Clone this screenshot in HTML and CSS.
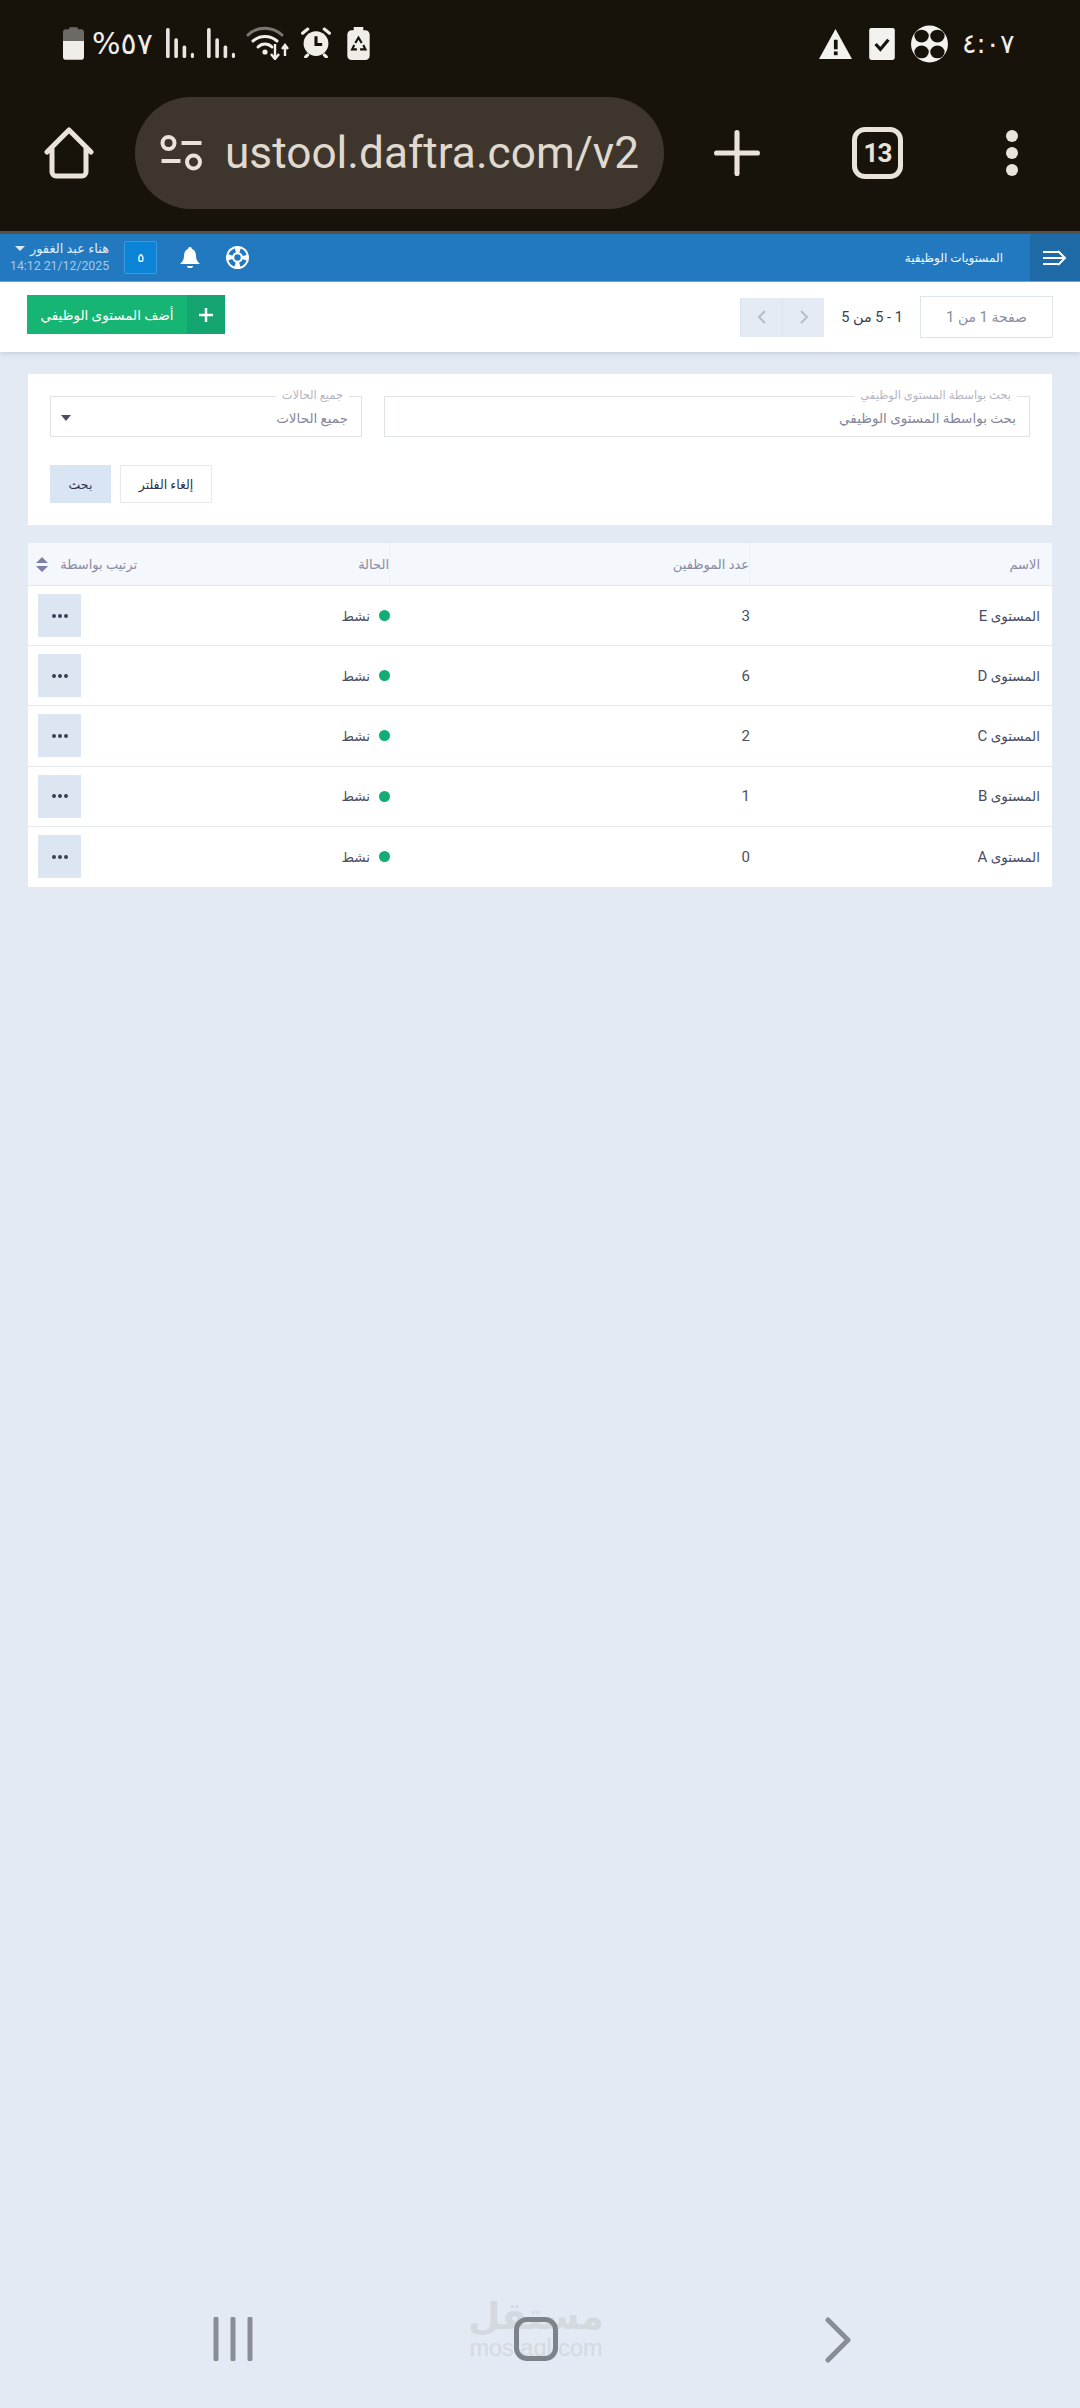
FILE: index.html
```html
<!doctype html>
<html lang="ar">
  <head>
    <meta charset="UTF-8" />
    <meta name="viewport" content="width=device-width, initial-scale=1.0" />
    <title>المستويات الوظيفية</title>
    <link rel="stylesheet" href="styles.css">
  </head>
  <body>
    <div class="chrome">
      <div class="status-bar">
        <div class="status-group">
          <svg class="ic-battery" width="21" height="33" viewBox="0 0 20 31"><path d="M6 0h8v2h3a3 3 0 0 1 3 3v8H0V5a3 3 0 0 1 3-3h3z" fill="#6d6966"/><path d="M0 13h20v15a3 3 0 0 1-3 3H3a3 3 0 0 1-3-3z" fill="#f1eeea"/></svg>
          <span class="status-pct">%٥٧</span>
          <svg class="ic-signal" width="28" height="30" viewBox="0 0 27 29"><g fill="#e9e6e1"><rect x="0" y="0" width="3.5" height="29" rx="1.5"/><rect x="8" y="10" width="3.5" height="19" rx="1.5"/><rect x="16" y="17" width="3.5" height="12" rx="1.5"/><rect x="24" y="24" width="3" height="5" rx="1.5"/></g></svg>
          <svg class="ic-signal" width="28" height="30" viewBox="0 0 27 29"><g fill="#e9e6e1"><rect x="0" y="0" width="3.5" height="29" rx="1.5"/><rect x="8" y="10" width="3.5" height="19" rx="1.5"/><rect x="16" y="17" width="3.5" height="12" rx="1.5"/><rect x="24" y="24" width="3" height="5" rx="1.5"/></g></svg>
          <svg class="ic-wifi" width="44" height="34" viewBox="0 0 44 34"><g fill="none" stroke-linecap="round" stroke-width="3"><path d="M2 9C11 0 26 0 36 9" stroke="#7a7673"/><path d="M7 15c7-6 17-6 24 0" stroke="#f1eeea"/><path d="M12 21c4-4 10-4 14 0" stroke="#f1eeea"/></g><circle cx="19" cy="26" r="2.6" fill="#f1eeea"/><g fill="none" stroke="#f1eeea" stroke-width="2.4"><path d="M29 18v14M25 28l4 5 4-5"/><path d="M39 30V19M36 23l3-4 3 4"/></g></svg>
          <svg class="ic-alarm" width="30" height="31" viewBox="0 0 28 30"><circle cx="14" cy="16" r="12" fill="#f1eeea"/><g stroke="#f1eeea" stroke-width="3" stroke-linecap="round"><path d="M1 6l5-4M27 6l-5-4M6 27l-2 2M22 27l2 2"/></g><path d="M14 9v8h6" fill="none" stroke="#18130a" stroke-width="3"/></svg>
          <svg class="ic-saver" width="23" height="33" viewBox="0 0 21 31"><path d="M6 0h9v3h2a4 4 0 0 1 4 4v20a4 4 0 0 1-4 4H4a4 4 0 0 1-4-4V7a4 4 0 0 1 4-4h2z" fill="#f1eeea"/><g fill="none" stroke="#18130a" stroke-width="2"><path d="M7.5 15l3-5 3 5"/><path d="M15 17l2 4h-5"/><path d="M9 21H4.500l2-4"/></g></svg>
        </div>
        <div class="status-group status-right">
          <svg class="ic-warn" width="33" height="30" viewBox="0 0 31 28"><path d="M15.500 0L31 28H0z" fill="#f4f2ef"/><rect x="14" y="10" width="3.500" height="9" fill="#18130a"/><rect x="14" y="21" width="3.500" height="3.500" fill="#18130a"/></svg>
          <svg class="ic-check" width="26" height="32" viewBox="0 0 24 30"><rect width="24" height="30" rx="2" fill="#f4f2ef"/><path d="M6 15l4.500 5L18 11" fill="none" stroke="#18130a" stroke-width="3"/></svg>
          <svg class="ic-fan" width="37" height="38" viewBox="0 0 35 36"><circle cx="17.500" cy="18" r="17.500" fill="#f4f2ef"/><g fill="#18130a"><ellipse cx="10" cy="10.500" rx="6.800" ry="6"/><ellipse cx="25" cy="10.500" rx="6.800" ry="6"/><ellipse cx="10" cy="25.500" rx="6.800" ry="6"/><ellipse cx="25" cy="25.500" rx="6.800" ry="6"/></g></svg>
          <span class="status-time">٤:٠٧</span>
        </div>
      </div>
      <div class="toolbar">
        <svg class="ic-home" width="52" height="52" viewBox="0 0 50 52"><path d="M3 25L25 3l22 22M8 21v24a4 4 0 0 0 4 4h26a4 4 0 0 0 4-4V21" fill="none" stroke="#eae3da" stroke-width="5" stroke-linecap="round" stroke-linejoin="round"/></svg>
        <div class="url-pill">
          <svg width="43" height="36" viewBox="0 0 42 36"><g fill="none" stroke="#eae3da" stroke-width="4"><circle cx="8" cy="8" r="6"/><circle cx="33" cy="27" r="6.500"/></g><g stroke="#eae3da" stroke-width="4"><path d="M21 8h20M1 26h19"/></g></svg>
          <span class="url-text">ustool.daftra.com/v2</span>
        </div>
        <svg class="ic-plus" width="46" height="46" viewBox="0 0 45 45"><path d="M2.500 22.500h40M22.500 2.500v40" stroke="#eae3da" stroke-width="5" stroke-linecap="round"/></svg>
        <div class="tab-count">13</div>
        <svg class="ic-dots" width="14" height="46" viewBox="0 0 14 46"><g fill="#eae3da"><circle cx="7" cy="6" r="6"/><circle cx="7" cy="23" r="6"/><circle cx="7" cy="40" r="6"/></g></svg>
      </div>
    </div>

    <div class="page" dir="rtl">
      <header class="topbar">
        <div class="topbar-toggle">
          <svg width="24" height="16" viewBox="0 0 24 16"><g fill="none" stroke="#fff" stroke-width="2"><path d="M0 2h15M0 8h22M0 14h15M15 1l7 7-7 7"/></g></svg>
        </div>
        <div class="topbar-title">المستويات الوظيفية</div>
        <div class="topbar-actions">
          <svg class="ic-help" width="23" height="23" viewBox="0 0 23 23"><circle cx="11.500" cy="11.500" r="11.500" fill="#fff"/><circle cx="11.500" cy="11.500" r="7.500" fill="none" stroke="#2279bf" stroke-width="4" stroke-dasharray="7 4.780" stroke-dashoffset="-2.390"/><circle cx="11.500" cy="11.500" r="3.200" fill="#2279bf"/></svg>
          <svg class="ic-bell" width="20" height="22" viewBox="0 0 20 22"><path d="M10 0a2 2 0 0 1 2 2c3 1 4 4 4 7 0 4 2 6 4 8H0c2-2 4-4 4-8 0-3 1-6 4-7a2 2 0 0 1 2-2z" fill="#fff"/><path d="M7 19h6a3 2 0 0 1-6 0z" fill="#fff"/></svg>
          <div class="branch-btn">٥</div>
          <div class="user-box">
            <div class="user-name">هناء عبد الغفور <span class="caret"></span></div>
            <div class="user-date">14:12 21/12/2025</div>
          </div>
        </div>
      </header>

      <div class="subbar">
        <div class="pager">
          <div class="page-box"><span>صفحة <span class="lat">1</span> من <span class="lat">1</span></span></div>
          <div class="page-range">1 - 5 من 5</div>
          <div class="page-nav">
            <span><svg width="10" height="16" viewBox="0 0 10 16"><path d="M2 2l6 6-6 6" fill="none" stroke="#b9bcc6" stroke-width="2"/></svg></span>
            <span><svg width="10" height="16" viewBox="0 0 10 16"><path d="M8 2L2 8l6 6" fill="none" stroke="#b9bcc6" stroke-width="2"/></svg></span>
          </div>
        </div>
        <div class="add-btn">
          <span class="add-icon"><svg width="14" height="14" viewBox="0 0 14 14"><path d="M0 7h14M7 0v14" stroke="#fff" stroke-width="2.500"/></svg></span>
          <span class="add-label">أضف المستوى الوظيفي</span>
        </div>
      </div>

      <main class="content">
        <section class="filter-card">
          <div class="filter-fields">
            <div class="field field-wide">
              <span class="field-legend">بحث بواسطة المستوى الوظيفي</span>
              <span class="field-value">بحث بواسطة المستوى الوظيفي</span>
            </div>
            <div class="field field-select">
              <span class="field-legend">جميع الحالات</span>
              <span class="field-value">جميع الحالات</span>
              <span class="select-caret"></span>
            </div>
          </div>
          <div class="filter-actions">
            <div class="btn-clear">إلغاء الفلتر</div>
            <div class="btn-search">بحث</div>
          </div>
        </section>

        <section class="table-card">
          <div class="row head">
            <div class="cell c-name">الاسم</div>
            <div class="cell c-count">عدد الموظفين</div>
            <div class="cell c-status">الحالة</div>
            <div class="cell c-action">ترتيب بواسطة <svg class="ic-sort" width="12" height="15" viewBox="0 0 12 15"><path d="M6 0l6 6H0zM6 15L0 9h12z" fill="#7d7fa6"/></svg></div>
          </div>
          <div class="row">
            <div class="cell c-name"><span>المستوى <span class="lat">E</span></span></div>
            <div class="cell c-count">3</div>
            <div class="cell c-status"><i class="dot"></i>نشط</div>
            <div class="cell c-action"><div class="more-btn"><i></i><i></i><i></i></div></div>
          </div>
          <div class="row">
            <div class="cell c-name"><span>المستوى <span class="lat">D</span></span></div>
            <div class="cell c-count">6</div>
            <div class="cell c-status"><i class="dot"></i>نشط</div>
            <div class="cell c-action"><div class="more-btn"><i></i><i></i><i></i></div></div>
          </div>
          <div class="row">
            <div class="cell c-name"><span>المستوى <span class="lat">C</span></span></div>
            <div class="cell c-count">2</div>
            <div class="cell c-status"><i class="dot"></i>نشط</div>
            <div class="cell c-action"><div class="more-btn"><i></i><i></i><i></i></div></div>
          </div>
          <div class="row">
            <div class="cell c-name"><span>المستوى <span class="lat">B</span></span></div>
            <div class="cell c-count">1</div>
            <div class="cell c-status"><i class="dot"></i>نشط</div>
            <div class="cell c-action"><div class="more-btn"><i></i><i></i><i></i></div></div>
          </div>
          <div class="row">
            <div class="cell c-name"><span>المستوى <span class="lat">A</span></span></div>
            <div class="cell c-count">0</div>
            <div class="cell c-status"><i class="dot"></i>نشط</div>
            <div class="cell c-action"><div class="more-btn"><i></i><i></i><i></i></div></div>
          </div>
        </section>
      </main>

      <nav class="nav-bar" dir="ltr">
        <svg width="40" height="44" viewBox="0 0 40 44"><path d="M3 2v40M20 2v40M37 2v40" stroke="#8a8e94" stroke-width="5" stroke-linecap="round"/></svg>
        <div class="nav-home">
          <div class="watermark">
            <span class="wm-ar">مستقل</span>
            <span class="wm-en">mostaql.com</span>
          </div>
          <div class="home-ring"></div>
        </div>
        <svg width="26" height="46" viewBox="0 0 26 46"><path d="M3 3l20 20L3 43" fill="none" stroke="#8a8e94" stroke-width="5" stroke-linecap="round" stroke-linejoin="round"/></svg>
      </nav>
    </div>
  </body>
</html>
```

FILE: styles.css
```css
* {
  box-sizing: border-box;
}
body {
  margin: 0;
  width: 1080px;
  height: 2408px;
  display: flex;
  flex-direction: column;
  background: #e4eaf3;
  font-family: Roboto, "DejaVu Sans", sans-serif;
  overflow: hidden;
}

/* phone + browser chrome */
.chrome {
  height: 234px;
  background: #18130a;
  border-bottom: 3px solid #55524a;
  flex-shrink: 0;
}
.status-bar {
  height: 97px;
  padding: 25px 68px 0 63px;
  display: flex;
  justify-content: space-between;
  align-items: flex-start;
}
.status-group {
  display: flex;
  align-items: flex-start;
  margin-top: 2px;
}
.status-pct {
  font-family: "DejaVu Sans", sans-serif;
  font-size: 30px;
  line-height: 34px;
  color: #f1eeea;
  width: 61px;
  margin-left: 8px;
  margin-right: 13px;
}
.ic-signal {
  margin-right: 13px;
  margin-top: 1px;
}
.ic-signal + .ic-signal {
  margin-right: 11px;
}
.ic-wifi {
  margin-right: 11px;
  margin-top: -1px;
}
.ic-alarm {
  margin-right: 16px;
}
.status-right {
  margin-top: 0;
}
.ic-warn {
  margin-top: 4px;
  margin-right: 17px;
}
.ic-check {
  margin-top: 3px;
  margin-right: 16px;
}
.ic-fan {
  margin-right: 14px;
}
.status-time {
  font-family: "DejaVu Sans", sans-serif;
  font-size: 27px;
  line-height: 38px;
  width: 50px;
  color: #f1eeea;
  white-space: nowrap;
}
.toolbar {
  height: 112px;
  display: flex;
  align-items: center;
  padding-left: 43px;
}
.ic-home {
  margin-right: 40px;
  flex-shrink: 0;
}
.url-pill {
  width: 529px;
  height: 112px;
  border-radius: 56px;
  background: #3e362c;
  display: flex;
  align-items: center;
  padding-left: 25px;
  gap: 22px;
  overflow: hidden;
  flex-shrink: 0;
}
.url-text {
  font-size: 44.2px;
  color: #e0d9cf;
  white-space: nowrap;
}
.ic-plus {
  margin-left: 50px;
}
.tab-count {
  width: 51px;
  height: 52px;
  margin-left: 92px;
  border: 5px solid #eae3da;
  border-radius: 13px;
  color: #eae3da;
  font-size: 26px;
  font-weight: 700;
  display: flex;
  align-items: center;
  justify-content: center;
  letter-spacing: -1px;
}
.ic-dots {
  margin-left: 102px;
}

/* app */
.page {
  flex: 1;
  display: flex;
  flex-direction: column;
  min-height: 0;
}
.lat {
  font-size: 15px;
}
.topbar {
  height: 48px;
  background: #2279bf;
  border-bottom: 1px solid #6fa5d3;
  display: flex;
  align-items: center;
  flex-shrink: 0;
}
.topbar-toggle {
  width: 50px;
  height: 47px;
  background: #1e6aa6;
  display: flex;
  align-items: center;
  justify-content: center;
}
.topbar-title {
  color: #f2f7fc;
  font-size: 12px;
  margin-right: 27px;
}
.topbar-actions {
  margin-right: auto;
  display: flex;
  align-items: center;
  padding-left: 10px;
}
.ic-help {
  margin-left: 26px;
}
.ic-bell {
  margin-left: 23px;
}
.branch-btn {
  width: 33px;
  height: 33px;
  margin-left: 15px;
  background: #0b84d8;
  border: 1px solid #3c9be0;
  border-radius: 2px;
  color: #fff;
  font-size: 13px;
  display: flex;
  align-items: center;
  justify-content: center;
}
.user-box {
  text-align: right;
}
.user-name {
  color: #dcebf7;
  font-size: 13px;
  line-height: 18px;
}
.caret {
  display: inline-block;
  border-left: 5px solid transparent;
  border-right: 5px solid transparent;
  border-top: 5px solid #dbe9f6;
  margin-right: 2px;
  vertical-align: 2px;
}
.user-date {
  color: #a6c8e6;
  font-size: 12.300px;
  line-height: 17px;
  direction: ltr;
}
.subbar {
  height: 70px;
  background: #fff;
  box-shadow: 0 2px 4px rgba(120, 140, 170, 0.25);
  display: flex;
  justify-content: space-between;
  align-items: center;
  padding: 0 27px;
  flex-shrink: 0;
}
.pager {
  display: flex;
  align-items: center;
}
.page-box {
  width: 133px;
  height: 42px;
  border: 1px solid #dfe3ea;
  color: #8a8ca3;
  font-size: 14px;
  display: flex;
  align-items: center;
  justify-content: center;
}
.page-range {
  width: 96px;
  font-size: 14.500px;
  color: #3a3f55;
  text-align: center;
}
.page-nav {
  display: flex;
  height: 39px;
}
.page-nav span {
  width: 42px;
  background: #e4ebf5;
  display: flex;
  align-items: center;
  justify-content: center;
  border-left: 1px solid #dbe3ee;
}
.add-btn {
  display: flex;
  height: 39px;
  width: 198px;
  margin-top: -5px;
  color: #fff;
}
.add-icon {
  width: 38px;
  background: #13a470;
  display: flex;
  align-items: center;
  justify-content: center;
}
.add-label {
  flex: 1;
  background: #17b573;
  font-size: 13.500px;
  display: flex;
  align-items: center;
  justify-content: center;
}
.content {
  flex: 1;
  padding: 22px 28px 0;
}
.filter-card {
  background: #fff;
  height: 151px;
  padding: 22px 22px 0;
}
.filter-fields {
  display: flex;
  gap: 22px;
}
.field {
  position: relative;
  height: 41px;
  border: 1px solid #dfe2e8;
  display: flex;
  align-items: center;
  padding: 3px 13px 0 0;
}
.field-wide {
  width: 646px;
}
.field-select {
  width: 312px;
}
.field-legend {
  position: absolute;
  top: -9px;
  right: 12px;
  background: #fff;
  padding: 0 6px;
  font-size: 11.500px;
  line-height: 15px;
  color: #b3b5c4;
}
.field-value {
  font-size: 13.500px;
  color: #85879d;
}
.select-caret {
  position: absolute;
  left: 10px;
  top: 18px;
  border-left: 5px solid transparent;
  border-right: 5px solid transparent;
  border-top: 6px solid #4a4d60;
}
.filter-actions {
  margin-top: 28px;
  display: flex;
  justify-content: flex-end;
  gap: 9px;
}
.btn-search {
  width: 61px;
  height: 38px;
  background: #d9e5f2;
  color: #2e3350;
  font-size: 12.500px;
  display: flex;
  align-items: center;
  justify-content: center;
}
.btn-clear {
  width: 92px;
  height: 38px;
  border: 1px solid #e6e9ef;
  color: #2e3350;
  font-size: 12.500px;
  display: flex;
  align-items: center;
  justify-content: center;
}
.table-card {
  margin-top: 18px;
  background: #fff;
}
.row {
  height: 60.200px;
  display: flex;
  border-bottom: 1px solid #e4e7ec;
  color: #4a4e63;
  font-size: 13.500px;
}
.row:last-child {
  border-bottom: 0;
}
.row.head {
  height: 43px;
  background: #f4f7fb;
  color: #8a8ca3;
  font-size: 13px;
}
.cell {
  display: flex;
  align-items: center;
}
.c-name {
  width: 302px;
  padding-right: 12px;
}
.c-count {
  width: 360px;
  font-size: 15px;
}
.head .c-count {
  font-size: 13px;
}
.c-status {
  width: 245px;
  gap: 9px;
}
.c-action {
  flex: 1;
  padding-left: 10px;
  justify-content: space-between;
  white-space: nowrap;
}
.head .c-action {
  padding: 0 8px;
}
.head .c-count,
.head .c-status {
  border-right: 1px solid #eef1f6;
}
.dot {
  width: 11px;
  height: 11px;
  border-radius: 50%;
  background: #12ad74;
}
.more-btn {
  width: 43px;
  height: 43px;
  margin-right: auto;
  background: #dce6f2;
  display: flex;
  align-items: center;
  justify-content: center;
  gap: 2px;
}
.more-btn i {
  width: 4px;
  height: 4px;
  border-radius: 50%;
  background: #3a3f55;
}
.nav-bar {
  height: 128px;
  padding: 37px 0 0 213px;
  display: flex;
  align-items: flex-start;
  flex-shrink: 0;
}
.nav-home {
  position: relative;
  width: 44px;
  height: 44px;
  margin-left: 261px;
  margin-right: 267px;
}
.home-ring {
  position: relative;
  width: 44px;
  height: 44px;
  border: 5px solid #7e8389;
  border-radius: 13px;
}
.watermark {
  position: absolute;
  left: -44px;
  top: -20px;
  width: 132px;
  display: flex;
  flex-direction: column;
  align-items: center;
  color: #d4d9df;
  line-height: 1;
}
.wm-ar {
  font-size: 37px;
  font-weight: 700;
  line-height: 40px;
}
.wm-en {
  font-family: "Liberation Sans", sans-serif;
  font-size: 23.500px;
  line-height: 22px;
}
```
